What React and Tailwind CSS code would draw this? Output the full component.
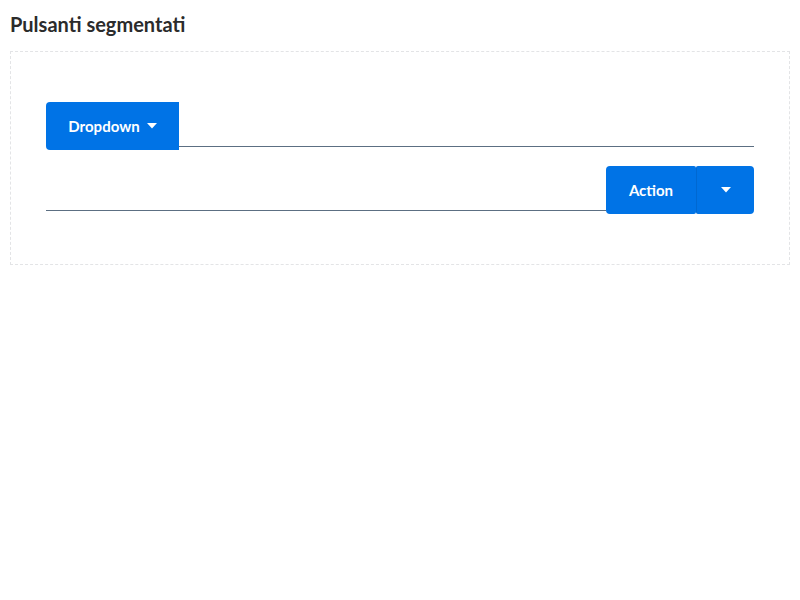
const Caret = () => (
  <svg width="10" height="6" viewBox="0 0 10 6" className="inline-block">
    <path d="M0 0h10L5 5.5z" fill="currentColor" />
  </svg>
);

const App = () => {
  return (
    <div className="min-h-screen bg-white p-[10px]" style={{ fontFamily: 'Lato, "Open Sans", sans-serif' }}>
      <h2 className="text-[20px] leading-[26px] font-bold text-[#2b2b2b] mt-px mb-[14px]">Pulsanti segmentati</h2>
      <div className="border border-dashed border-[#e3e4e6] px-[35px] pt-[50px] pb-[50px] flex flex-col gap-4">
        <div className="flex items-start">
          <button className="h-12 w-[133px] bg-[#0073e6] text-white font-bold text-[15px] rounded-l-[4px] flex items-center justify-center gap-[7px]">
            Dropdown <Caret />
          </button>
          <div className="flex-1 h-[45px] border-b border-[#5c6f82]"></div>
        </div>
        <div className="flex items-start">
          <div className="flex-1 h-[45px] border-b border-[#5c6f82]"></div>
          <button className="h-12 w-[90px] bg-[#0073e6] text-white font-bold text-[15px] rounded-l-[4px] rounded-r-[2px]">
            Action
          </button>
          <button className="h-12 w-[58px] bg-[#0073e6] border-l border-[#0068d1] text-white rounded-r-[4px] rounded-l-[2px] flex items-center justify-center">
            <Caret />
          </button>
        </div>
      </div>
    </div>
  );
};

export default App;
